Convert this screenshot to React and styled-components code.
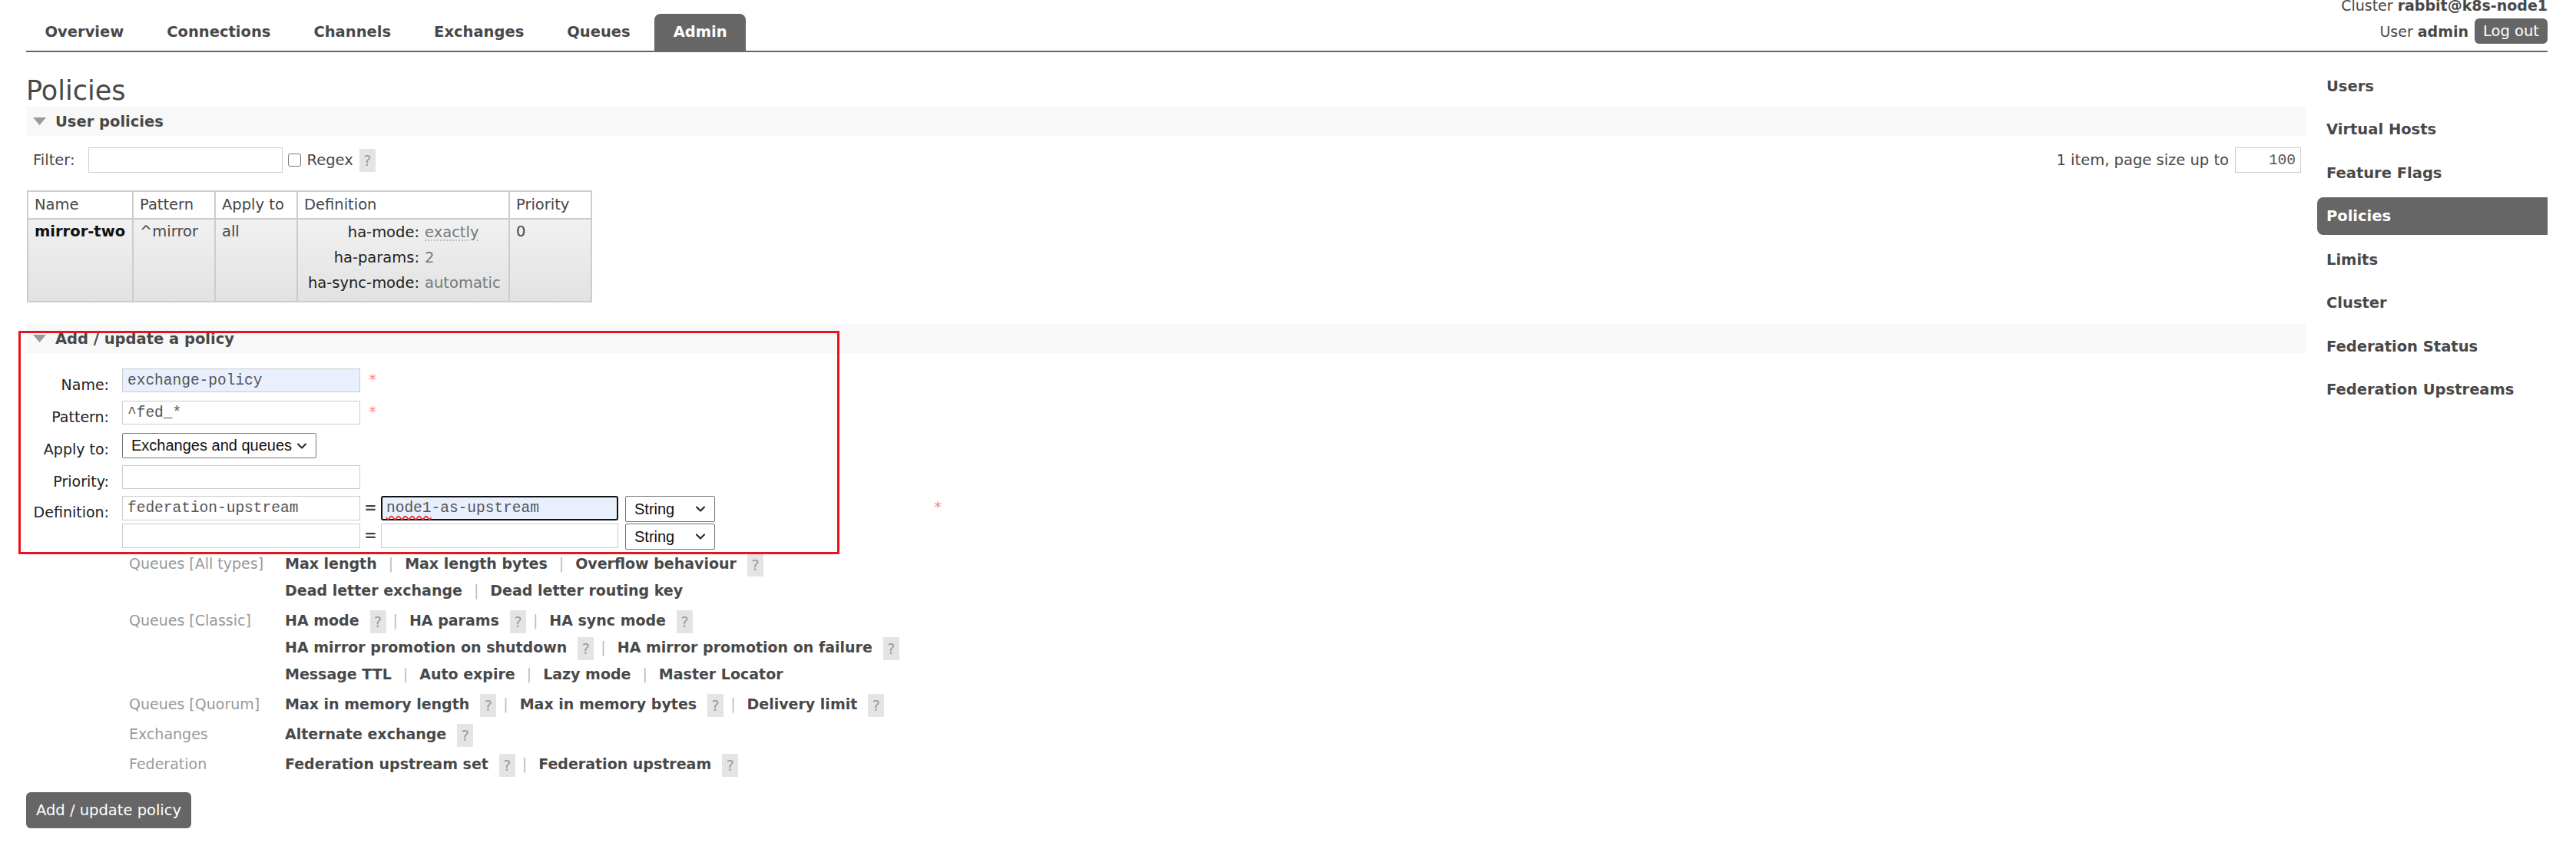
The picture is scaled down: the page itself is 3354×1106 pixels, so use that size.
import React from "react";
import styled, { createGlobalStyle } from "styled-components";
import { ChevronDown } from "lucide-react";

const GlobalStyle = createGlobalStyle`
  html, body {
    margin: 0;
    padding: 0;
    background: #fff;
  }
  body {
    font-family: "DejaVu Sans", Verdana, sans-serif;
    font-size: 19.5px;
    color: #484848;
  }
  * {
    box-sizing: border-box;
  }
`;

const Header = styled.header`
  display: flex;
  justify-content: space-between;
  align-items: flex-start;
  height: 68px;
  margin: 0 37px 0 34px;
  border-bottom: 2px solid #666;
`;

const Tabs = styled.ul`
  display: flex;
  gap: 7px;
  list-style: none;
  margin: 18px 0 0;
  padding: 0;
`;

const Tab = styled.li`
  height: 48px;
  line-height: 48px;
  padding: 0 24.5px;
  font-size: 19.5px;
  font-weight: bold;
  color: ${(p) => (p.$active ? "#fff" : "#484848")};
  background: ${(p) => (p.$active ? "#666" : "transparent")};
  border-radius: 8px 8px 0 0;
`;

const UserBox = styled.div`
  display: flex;
  flex-direction: column;
  align-items: flex-end;
  margin-top: -5px;
  font-size: 19px;
`;

const ClusterLine = styled.div`
  line-height: 24px;
`;

const UserLine = styled.div`
  display: flex;
  align-items: center;
  gap: 8px;
  height: 33px;
  margin-top: 5px;
`;

const DarkButton = styled.button`
  height: ${(p) => p.$h || 33}px;
  padding: 0 ${(p) => p.$px || 11}px;
  border: none;
  border-radius: 6px;
  background: #666;
  color: #fff;
  font-family: "DejaVu Sans", Verdana, sans-serif;
  font-size: 19.5px;
  line-height: ${(p) => p.$h || 33}px;
`;

const Page = styled.div`
  display: flex;
  gap: 15px;
  padding: 0 37px 0 34px;
`;

const Main = styled.main`
  flex: 1;
  min-width: 0;
`;

const Title = styled.h1`
  margin: 29px 0 0;
  font-size: 35px;
  line-height: 42px;
  font-weight: normal;
  color: #484848;
`;

const SectionBar = styled.h2`
  display: flex;
  align-items: center;
  gap: 12px;
  height: 38px;
  margin: ${(p) => p.$mt || 0}px 0 0;
  padding-left: 9px;
  background: #f8f8f8;
  font-size: 19.5px;
  font-weight: bold;
  color: #484848;
`;

const FilterRow = styled.div`
  display: flex;
  align-items: center;
  height: 33px;
  margin-top: 15px;
  padding-left: 9px;
`;

const TextInput = styled.input`
  width: ${(p) => p.$w || 310}px;
  height: ${(p) => p.$h || 31}px;
  padding: 0 6px;
  border: 1px solid #ccc;
  background: ${(p) => (p.$filled ? "#e8f0fe" : "#fff")};
  font-family: "Liberation Mono", "DejaVu Sans Mono", monospace;
  font-size: 19.5px;
  color: #555;
  text-align: ${(p) => p.$align || "left"};
  outline: none;
`;

const Check = styled.span`
  display: inline-block;
  width: 17px;
  height: 17px;
  margin: 0 8px 0 7px;
  border: 1px solid #767676;
  border-radius: 3px;
  background: #fff;
`;

const HelpBox = styled.span`
  display: inline-block;
  width: 21px;
  height: 30px;
  margin-left: ${(p) => p.$ml ?? 14}px;
  line-height: 30px;
  text-align: center;
  background: #e4e4e4;
  color: #999;
  font-weight: normal;
  font-size: 19px;
  vertical-align: middle;
`;

const Pager = styled.div`
  display: flex;
  align-items: center;
  gap: 8px;
  margin-left: auto;
  margin-right: 6px;
`;

const PolicyTable = styled.table`
  border-collapse: collapse;
  margin: 23px 0 0 1px;
  th,
  td {
    border: 2px solid #ccc;
    text-align: left;
    vertical-align: top;
    white-space: nowrap;
  }
  th {
    height: 36px;
    padding: 0 8px;
    font-weight: normal;
    line-height: 34px;
    background: #fff;
  }
  tbody tr {
    background: linear-gradient(#f1f1f1, #e2e2e2);
  }
  td {
    padding: 4px 8px 7px;
    line-height: 24px;
  }
`;

const DefCell = styled.td`
  && {
    padding: 0 8px 7px;
  }
`;

const DefGrid = styled.div`
  display: grid;
  grid-template-columns: 150px auto;
  column-gap: 7px;
  line-height: 33px;
`;

const DefKey = styled.span`
  text-align: right;
  color: #222;
`;

const DefValue = styled.span`
  color: #777;
  & abbr {
    text-decoration: underline dotted #bbb;
    text-underline-offset: 4px;
  }
`;

const AddSection = styled.section`
  position: relative;
`;

const Annotation = styled.div`
  position: absolute;
  top: 9px;
  left: -10px;
  width: 1069px;
  height: 291px;
  border: 3px solid #e8141c;
  pointer-events: none;
`;

const Form = styled.div`
  margin-top: 20px;
`;

const FormRow = styled.div`
  display: flex;
  align-items: flex-start;
  height: ${(p) => p.$h}px;
`;

const FormLabel = styled.label`
  width: 108px;
  margin-right: 17px;
  padding-top: ${(p) => p.$pt ?? 9}px;
  text-align: right;
  line-height: 24px;
  font-size: 19px;
  color: #222;
`;

const Required = styled.span`
  margin: 4px 0 0 ${(p) => p.$ml || 11}px;
  font-size: 20px;
  line-height: 20px;
  color: #f88;
`;

const SelectBox = styled.div`
  display: flex;
  align-items: center;
  justify-content: space-between;
  width: ${(p) => p.$w}px;
  height: ${(p) => p.$h || 33}px;
  padding: 0 8px 0 11px;
  border: 1px solid #767676;
  border-radius: 2px;
  background: #fff;
  font-family: "Liberation Sans", Arial, sans-serif;
  font-size: 20px;
  color: #111;
`;

const Equals = styled.span`
  width: 27px;
  line-height: 32px;
  text-align: center;
  font-weight: bold;
  color: #444;
`;

const FocusedInput = styled.div`
  width: 309px;
  height: 32px;
  padding: 0 5px;
  border: 2px solid #111;
  border-radius: 3px;
  background: #e8f0fe;
  font-family: "Liberation Mono", "DejaVu Sans Mono", monospace;
  font-size: 19.5px;
  line-height: 28px;
  color: #555;
`;

const Misspelled = styled.span`
  text-decoration: underline wavy #e33;
  text-decoration-skip-ink: none;
  text-underline-offset: 4px;
`;

const Options = styled.div`
  margin: 2px 0 0 134px;
`;

const OptGroup = styled.div`
  display: grid;
  grid-template-columns: 203px 1fr;
  align-items: baseline;
  margin-top: ${(p) => (p.$first ? 0 : 4)}px;
`;

const OptLabel = styled.span`
  font-size: 19px;
  line-height: 35px;
  color: #999;
  white-space: nowrap;
`;

const OptLine = styled.div`
  line-height: 35px;
  font-size: 19px;
  font-weight: bold;
  color: #484848;
  white-space: nowrap;
`;

const Sep = styled.span`
  margin: 0 15px;
  font-weight: normal;
  color: #bbb;
  ${HelpBox} + & {
    margin-left: 9px;
  }
`;

const Sidebar = styled.nav`
  width: 300px;
  flex: none;
`;

const SideList = styled.ul`
  display: flex;
  flex-direction: column;
  gap: 7.5px;
  list-style: none;
  margin: 19.5px 0 0;
  padding: 0;
`;

const SideItem = styled.li`
  height: 49px;
  line-height: 49px;
  padding-left: 12px;
  font-weight: bold;
  font-size: 19.5px;
  border-radius: 8px 0 0 8px;
  color: ${(p) => (p.$active ? "#fff" : "#484848")};
  background: ${(p) => (p.$active ? "#666" : "transparent")};
`;

const Triangle = () => (
  <svg width="17" height="10" viewBox="0 0 17 10">
    <polygon points="0,0 17,0 8.5,10" fill="#9a9a9a" />
  </svg>
);

const tabs = ["Overview", "Connections", "Channels", "Exchanges", "Queues", "Admin"];
const sideItems = [
  "Users",
  "Virtual Hosts",
  "Feature Flags",
  "Policies",
  "Limits",
  "Cluster",
  "Federation Status",
  "Federation Upstreams",
];

const optionGroups = [
  {
    label: "Queues [All types]",
    lines: [
      [{ t: "Max length" }, { t: "Max length bytes" }, { t: "Overflow behaviour", help: true }],
      [{ t: "Dead letter exchange" }, { t: "Dead letter routing key" }],
    ],
  },
  {
    label: "Queues [Classic]",
    lines: [
      [
        { t: "HA mode", help: true },
        { t: "HA params", help: true },
        { t: "HA sync mode", help: true },
      ],
      [
        { t: "HA mirror promotion on shutdown", help: true },
        { t: "HA mirror promotion on failure", help: true },
      ],
      [{ t: "Message TTL" }, { t: "Auto expire" }, { t: "Lazy mode" }, { t: "Master Locator" }],
    ],
  },
  {
    label: "Queues [Quorum]",
    lines: [
      [
        { t: "Max in memory length", help: true },
        { t: "Max in memory bytes", help: true },
        { t: "Delivery limit", help: true },
      ],
    ],
  },
  {
    label: "Exchanges",
    lines: [[{ t: "Alternate exchange", help: true }]],
  },
  {
    label: "Federation",
    lines: [
      [
        { t: "Federation upstream set", help: true },
        { t: "Federation upstream", help: true },
      ],
    ],
  },
];

function OptionLine({ items }) {
  return (
    <OptLine>
      {items.map((it, i) => (
        <React.Fragment key={it.t}>
          {i > 0 && <Sep>|</Sep>}
          <span>{it.t}</span>
          {it.help && <HelpBox>?</HelpBox>}
        </React.Fragment>
      ))}
    </OptLine>
  );
}

export default function App() {
  return (
    <>
      <GlobalStyle />
      <Header>
        <Tabs>
          {tabs.map((t) => (
            <Tab key={t} $active={t === "Admin"}>
              {t}
            </Tab>
          ))}
        </Tabs>
        <UserBox>
          <ClusterLine>
            Cluster <b>rabbit@k8s-node1</b>
          </ClusterLine>
          <UserLine>
            <span>
              User <b>admin</b>
            </span>
            <DarkButton>Log out</DarkButton>
          </UserLine>
        </UserBox>
      </Header>

      <Page>
        <Main>
          <Title>Policies</Title>

          <section>
            <SectionBar>
              <Triangle />
              User policies
            </SectionBar>
            <FilterRow>
              <span style={{ marginRight: 17 }}>Filter:</span>
              <TextInput $w={253} $h={33} readOnly />
              <Check />
              <span>Regex</span>
              <HelpBox $ml={8}>?</HelpBox>
              <Pager>
                <span>1 item, page size up to</span>
                <TextInput $w={86} $h={33} $align="right" defaultValue="100" readOnly />
              </Pager>
            </FilterRow>

            <PolicyTable>
              <thead>
                <tr>
                  <th style={{ width: 137 }}>Name</th>
                  <th style={{ width: 107 }}>Pattern</th>
                  <th style={{ width: 107 }}>Apply to</th>
                  <th style={{ width: 276 }}>Definition</th>
                  <th style={{ width: 107 }}>Priority</th>
                </tr>
              </thead>
              <tbody>
                <tr>
                  <td>
                    <b style={{ color: "#111" }}>mirror-two</b>
                  </td>
                  <td>^mirror</td>
                  <td>all</td>
                  <DefCell>
                    <DefGrid>
                      <DefKey>ha-mode:</DefKey>
                      <DefValue>
                        <abbr>exactly</abbr>
                      </DefValue>
                      <DefKey>ha-params:</DefKey>
                      <DefValue>2</DefValue>
                      <DefKey>ha-sync-mode:</DefKey>
                      <DefValue>automatic</DefValue>
                    </DefGrid>
                  </DefCell>
                  <td>0</td>
                </tr>
              </tbody>
            </PolicyTable>
          </section>

          <AddSection>
            <SectionBar $mt={28}>
              <Triangle />
              Add / update a policy
            </SectionBar>
            <Form>
              <FormRow $h={42}>
                <FormLabel>Name:</FormLabel>
                <TextInput $filled defaultValue="exchange-policy" readOnly />
                <Required>*</Required>
              </FormRow>
              <FormRow $h={42}>
                <FormLabel>Pattern:</FormLabel>
                <TextInput defaultValue="^fed_*" readOnly />
                <Required>*</Required>
              </FormRow>
              <FormRow $h={42}>
                <FormLabel>Apply to:</FormLabel>
                <SelectBox $w={253}>
                  Exchanges and queues
                  <ChevronDown size={20} strokeWidth={2.5} color="#222" />
                </SelectBox>
              </FormRow>
              <FormRow $h={40}>
                <FormLabel>Priority:</FormLabel>
                <TextInput readOnly />
              </FormRow>
              <FormRow $h={36}>
                <FormLabel>Definition:</FormLabel>
                <TextInput $h={32} defaultValue="federation-upstream" readOnly />
                <Equals>=</Equals>
                <FocusedInput>
                  <Misspelled>node1</Misspelled>-as-upstream
                </FocusedInput>
                <SelectBox $w={117} $h={34} style={{ marginLeft: 9 }}>
                  String
                  <ChevronDown size={20} strokeWidth={2.5} color="#222" />
                </SelectBox>
                <Required $ml={285}>*</Required>
              </FormRow>
              <FormRow $h={33}>
                <FormLabel />
                <TextInput $h={32} readOnly />
                <Equals>=</Equals>
                <TextInput $w={309} $h={32} readOnly />
                <SelectBox $w={117} $h={34} style={{ marginLeft: 9 }}>
                  String
                  <ChevronDown size={20} strokeWidth={2.5} color="#222" />
                </SelectBox>
              </FormRow>
            </Form>
            <Annotation />
          </AddSection>

          <Options>
            {optionGroups.map((g, gi) => (
              <OptGroup key={g.label} $first={gi === 0}>
                <OptLabel>{g.label}</OptLabel>
                <div>
                  {g.lines.map((line, li) => (
                    <OptionLine key={li} items={line} />
                  ))}
                </div>
              </OptGroup>
            ))}
          </Options>

          <div style={{ marginTop: 19 }}>
            <DarkButton $h={47} $px={13}>
              Add / update policy
            </DarkButton>
          </div>
        </Main>

        <Sidebar>
          <SideList>
            {sideItems.map((s) => (
              <SideItem key={s} $active={s === "Policies"}>
                {s}
              </SideItem>
            ))}
          </SideList>
        </Sidebar>
      </Page>
    </>
  );
}
